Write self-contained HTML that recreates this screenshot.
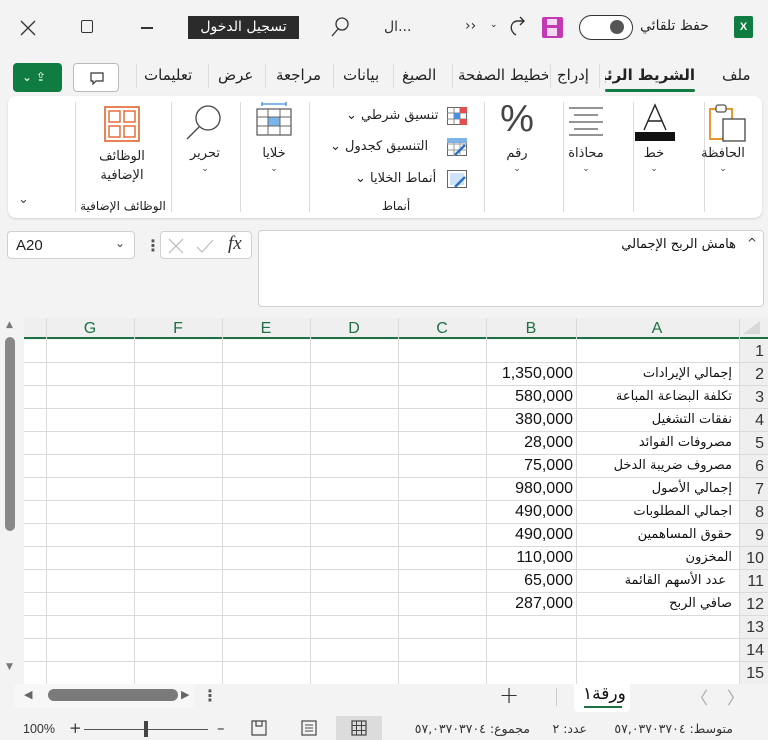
<!DOCTYPE html>
<html><head><meta charset="utf-8">
<style>
*{box-sizing:border-box;margin:0;padding:0}
body{width:768px;height:740px;overflow:hidden;background:#f3f3f3;position:relative;font-family:"DejaVu Sans","Liberation Sans",sans-serif;color:#222}
.a{position:absolute;white-space:nowrap}
.ar{font-family:"DejaVu Sans",sans-serif;font-size:13px}
.c{position:absolute;transform:translateX(-50%);white-space:nowrap;text-align:center}
.sep{position:absolute;width:1px;background:#dcdcdc}
.chev{font-size:9px;color:#444}
.cell{position:absolute;font-family:"Liberation Sans","DejaVu Sans",sans-serif;font-size:16px;color:#111;white-space:nowrap}
.lab{position:absolute;right:36px;font-family:"DejaVu Sans",sans-serif;font-size:13px;color:#111;white-space:nowrap}
.rn{position:absolute;right:4px;font-family:"Liberation Sans",sans-serif;font-size:16px;color:#333}
</style></head><body>

<svg class="a" style="left:20px;top:20px" width="16" height="16"><path d="M1 1L15 15M15 1L1 15" stroke="#333" stroke-width="1.3"/></svg>
<div class="a" style="left:81px;top:20px;width:12px;height:13px;border:1.5px solid #333;border-radius:2px"></div>
<div class="a" style="left:141px;top:27px;width:12px;height:1.5px;background:#333"></div>
<div class="a" style="left:188px;top:16px;width:111px;height:23px;background:#2b2b2b;color:#fff;font-size:14px;text-align:center;line-height:23px">تسجيل الدخول</div>
<svg class="a" style="left:330px;top:16px" width="20" height="22"><circle cx="12" cy="8" r="6" fill="none" stroke="#333" stroke-width="1.3"/><line x1="8" y1="13" x2="2" y2="20" stroke="#333" stroke-width="1.3"/></svg>
<div class="a" style="left:384px;top:19px;font-size:14px;color:#333">ال...</div>
<div class="a" style="left:465px;top:18px;font-size:14px;color:#333">››</div>
<div class="a" style="left:490px;top:20px;font-size:9px">⌄</div>
<svg class="a" style="left:506px;top:15px" width="24" height="24"><path d="M10 20 C3 16 4 7 11 6 L18 6 M14 2 L18 6 L14 10" fill="none" stroke="#333" stroke-width="1.4"/></svg>
<div class="a" style="left:542px;top:17px;width:21px;height:21px;background:#c239b3;border-radius:2px"><div style="position:absolute;left:5px;top:2px;width:10px;height:6px;background:#f5d8f2"></div><div style="position:absolute;left:5px;top:11px;width:10px;height:8px;background:#f5d8f2"></div></div>
<div class="a" style="left:579px;top:15px;width:54px;height:25px;border:1.5px solid #333;border-radius:13px;background:#fff"><div style="position:absolute;left:30px;top:4px;width:14px;height:14px;border-radius:7px;background:#555"></div></div>
<div class="a" style="left:640px;top:18px;font-size:14px">حفظ تلقائي</div>
<div class="a" style="left:734px;top:16px;width:19px;height:22px;background:#107c41;border-radius:2px;color:#fff;font-size:11px;font-weight:bold;text-align:center;line-height:22px;font-family:'Liberation Sans'">X</div>

<div class="a" style="left:13px;top:63px;width:49px;height:29px;background:#107c41;border-radius:4px;color:#fff;font-size:12px;line-height:29px;padding-left:9px">⌄ ⇪</div>
<div class="a" style="left:73px;top:63px;width:46px;height:29px;background:#fff;border:1px solid #bbb;border-radius:4px"><svg style="position:absolute;left:16px;top:8px" width="14" height="13"><path d="M1 1 H13 V9 H6 L3 12 V9 H1 Z" fill="none" stroke="#333" stroke-width="1.2"/></svg></div>
<div class="a" style="left:0;top:66px;width:768px;height:24px;font-size:15px">
 <span class="a" style="left:144px">تعليمات</span>
 <span class="a" style="left:218px">عرض</span>
 <span class="a" style="left:276px">مراجعة</span>
 <span class="a" style="left:343px">بيانات</span>
 <span class="a" style="left:402px">الصيغ</span>
 <span class="a" style="left:458px;width:90px;overflow:hidden">تخطيط الصفحة</span>
 <span class="a" style="left:557px">إدراج</span>
 <span class="a" style="left:605px;width:90px;overflow:hidden;font-weight:bold;direction:rtl;text-align:right">الشريط الرئيسي</span>
 <span class="a" style="left:722px">ملف</span>
</div>
<div class="sep" style="left:136px;top:64px;height:24px"></div>
<div class="sep" style="left:208px;top:64px;height:24px"></div>
<div class="sep" style="left:265px;top:64px;height:24px"></div>
<div class="sep" style="left:333px;top:64px;height:24px"></div>
<div class="sep" style="left:393px;top:64px;height:24px"></div>
<div class="sep" style="left:452px;top:64px;height:24px"></div>
<div class="sep" style="left:550px;top:64px;height:24px"></div>
<div class="sep" style="left:599px;top:64px;height:24px"></div>
<div class="a" style="left:605px;top:89px;width:90px;height:3px;background:#107c41;border-radius:2px"></div>

<div class="a" style="left:8px;top:96px;width:754px;height:122px;background:#fff;border-radius:8px;box-shadow:0 1px 2px rgba(0,0,0,.15)"></div>
<div class="sep" style="left:704px;top:102px;height:110px"></div>
<div class="sep" style="left:633px;top:102px;height:110px"></div>
<div class="sep" style="left:563px;top:102px;height:110px"></div>
<div class="sep" style="left:484px;top:102px;height:110px"></div>
<div class="sep" style="left:309px;top:102px;height:110px"></div>
<div class="sep" style="left:240px;top:102px;height:110px"></div>
<div class="sep" style="left:171px;top:102px;height:110px"></div>
<div class="sep" style="left:75px;top:102px;height:110px"></div>

<svg class="a" style="left:708px;top:103px" width="40" height="40"><rect x="2" y="6" width="22" height="30" fill="none" stroke="#e8962e" stroke-width="2"/><rect x="8" y="2" width="10" height="7" rx="2" fill="#fff" stroke="#555" stroke-width="1.3"/><rect x="15" y="16" width="22" height="22" fill="#fff" stroke="#444" stroke-width="1.3"/></svg>
<div class="c ar" style="left:723px;top:146px">الحافظة</div>
<div class="c chev" style="left:723px;top:164px">⌄</div>
<svg class="a" style="left:635px;top:102px" width="40" height="40"><path d="M9 28 L20 3 L31 28 M13 19 H27" fill="none" stroke="#222" stroke-width="1.4"/><rect x="0" y="30" width="40" height="9" fill="#111"/></svg>
<div class="c ar" style="left:654px;top:146px">خط</div>
<div class="c chev" style="left:654px;top:164px">⌄</div>
<svg class="a" style="left:566px;top:106px" width="40" height="30"><path d="M3 2H37M8 9H32M3 16H37M8 23H32M3 29H37" stroke="#555" stroke-width="1.3"/></svg>
<div class="c ar" style="left:586px;top:146px">محاذاة</div>
<div class="c chev" style="left:586px;top:164px">⌄</div>
<div class="c" style="left:517px;top:98px;font-size:38px;font-weight:200;color:#444;font-family:'Liberation Sans'">%</div>
<div class="c ar" style="left:517px;top:146px">رقم</div>
<div class="c chev" style="left:517px;top:164px">⌄</div>
<svg class="a" style="left:447px;top:107px" width="20" height="18"><rect x="0.5" y="0.5" width="19" height="17" fill="#fff" stroke="#666"/><path d="M7 0V18M13 0V18M0 6H20M0 12H20" stroke="#888"/><rect x="13" y="0" width="7" height="6" fill="#e05050"/><rect x="7" y="6" width="6" height="6" fill="#4a8fe0"/><rect x="13" y="12" width="7" height="6" fill="#e05050"/></svg>
<div class="a ar" style="left:346px;top:108px">⌄ تنسيق شرطي</div>
<svg class="a" style="left:447px;top:138px" width="20" height="18"><rect x="0.5" y="0.5" width="19" height="17" fill="#fff" stroke="#666"/><path d="M7 0V18M13 0V18M0 6H20M0 12H20" stroke="#999"/><rect x="0" y="0" width="20" height="5" fill="#7fb3e8"/><path d="M8 17 L18 7" stroke="#2a6fc0" stroke-width="2.5"/></svg>
<div class="a ar" style="left:330px;top:139px">⌄ التنسيق كجدول</div>
<svg class="a" style="left:447px;top:170px" width="20" height="18"><rect x="0.5" y="0.5" width="19" height="17" fill="#fff" stroke="#666"/><rect x="3" y="3" width="14" height="12" fill="#cfe2f8"/><path d="M8 17 L18 7" stroke="#2a6fc0" stroke-width="2.5"/></svg>
<div class="a ar" style="left:355px;top:171px">⌄ أنماط الخلايا</div>
<div class="c ar" style="left:396px;top:199px;font-size:12px">أنماط</div>
<svg class="a" style="left:256px;top:102px" width="36" height="34"><path d="M6 2H30M6 0V4M30 0V4" stroke="#3a8ee0" stroke-width="1.3"/><rect x="1" y="7" width="34" height="26" fill="#fff" stroke="#555" stroke-width="1.2"/><rect x="12" y="15" width="12" height="9" fill="#7ab4ea" stroke="#2a6fc0"/><path d="M12 7V33M24 7V33M1 15H35M1 24H35" stroke="#666"/></svg>
<div class="c ar" style="left:274px;top:146px">خلايا</div>
<div class="c chev" style="left:274px;top:164px">⌄</div>
<svg class="a" style="left:185px;top:103px" width="40" height="38"><circle cx="23" cy="15" r="12" fill="none" stroke="#444" stroke-width="1.3"/><line x1="14" y1="24" x2="2" y2="36" stroke="#444" stroke-width="1.3"/></svg>
<div class="c ar" style="left:205px;top:146px">تحرير</div>
<div class="c chev" style="left:205px;top:164px">⌄</div>
<svg class="a" style="left:104px;top:106px" width="36" height="36"><rect x="1" y="1" width="34" height="34" fill="none" stroke="#e0652f" stroke-width="1.6"/><rect x="5" y="5" width="11" height="11" fill="none" stroke="#e0652f" stroke-width="1.4"/><rect x="20" y="5" width="11" height="11" fill="none" stroke="#e0652f" stroke-width="1.4"/><rect x="5" y="20" width="11" height="11" fill="none" stroke="#e0652f" stroke-width="1.4"/><rect x="20" y="20" width="11" height="11" fill="none" stroke="#e0652f" stroke-width="1.4"/></svg>
<div class="c ar" style="left:122px;top:147px;line-height:19px">الوظائف<br>الإضافية</div>
<div class="c ar" style="left:123px;top:199px;font-size:12px">الوظائف الإضافية</div>
<div class="a" style="left:18px;top:192px;font-size:13px;color:#444">⌄</div>

<div class="a" style="left:7px;top:231px;width:128px;height:28px;background:#fff;border:1px solid #d0d0d0;border-radius:4px"><span class="a" style="left:8px;top:5px;font-family:'Liberation Sans';font-size:15px">A20</span><span class="a" style="left:107px;top:4px;font-size:12px;color:#444">⌄</span></div>
<div class="a" style="left:145px;top:236px;font-size:16px;font-weight:bold;color:#555">⋮</div>
<div class="a" style="left:160px;top:231px;width:92px;height:28px;background:#fff;border:1px solid #d0d0d0;border-radius:4px">
<svg style="position:absolute;left:7px;top:6px" width="16" height="16"><path d="M1 1L15 15M15 1L1 15" stroke="#bbb" stroke-width="1.2"/></svg>
<svg style="position:absolute;left:35px;top:6px" width="18" height="16"><path d="M1 9L6 14L17 2" fill="none" stroke="#bbb" stroke-width="1.2"/></svg>
<span style="position:absolute;left:67px;top:1px;font-family:'Liberation Serif';font-style:italic;font-size:19px;color:#333">fx</span></div>
<div class="a" style="left:258px;top:230px;width:506px;height:77px;background:#fff;border:1px solid #d0d0d0;border-radius:4px">
<span class="a" style="right:27px;top:6px;font-size:13px;color:#111">هامش الربح الإجمالي</span>
<span class="a" style="right:6px;top:5px;font-size:12px;color:#333">^</span></div>

<div class="a" style="left:24px;top:318px;width:744px;height:21px;background:#efefef;border-bottom:2px solid #1e7145"></div>
<div class="a" style="left:24px;top:340px;width:715px;height:344px;background:#fff"></div>
<div class="a" style="left:739px;top:340px;width:29px;height:344px;background:#efefef;overflow:hidden">
<span class="rn" style="top:3px">1</span><span class="rn" style="top:26px">2</span><span class="rn" style="top:49px">3</span><span class="rn" style="top:72px">4</span><span class="rn" style="top:95px">5</span><span class="rn" style="top:118px">6</span><span class="rn" style="top:141px">7</span><span class="rn" style="top:164px">8</span><span class="rn" style="top:187px">9</span><span class="rn" style="top:210px">10</span><span class="rn" style="top:233px">11</span><span class="rn" style="top:256px">12</span><span class="rn" style="top:279px">13</span><span class="rn" style="top:302px">14</span><span class="rn" style="top:325px">15</span></div>
<svg class="a" style="left:0;top:318px" width="768" height="366">
<g stroke="#dadada" stroke-width="1">
<path d="M46.5 0V366M134.5 0V366M222.5 0V366M310.5 0V366M398.5 0V366M486.5 0V366M576.5 0V366M739.5 0V366"/>
<path d="M24 44.5H768M24 67.5H768M24 90.5H768M24 113.5H768M24 136.5H768M24 159.5H768M24 182.5H768M24 205.5H768M24 228.5H768M24 251.5H768M24 274.5H768M24 297.5H768M24 320.5H768M24 343.5H768"/>
</g>
<path d="M743 16L760 16L760 3Z" fill="#d8d8d8"/>
</svg>
<div class="a" style="left:0;top:320px;width:768px;font-family:'Liberation Sans';font-size:16px;color:#1e7145">
<span class="c" style="left:90px">G</span><span class="c" style="left:178px">F</span><span class="c" style="left:266px">E</span><span class="c" style="left:354px">D</span><span class="c" style="left:442px">C</span><span class="c" style="left:531px">B</span><span class="c" style="left:657px">A</span></div>

<div class="a" style="left:0;top:340px;width:768px;height:344px">
<div class="lab" style="top:26px">إجمالي الإيرادات</div>
<div class="lab" style="top:49px">تكلفة البضاعة المباعة</div>
<div class="lab" style="top:72px">نفقات التشغيل</div>
<div class="lab" style="top:95px">مصروفات الفوائد</div>
<div class="lab" style="top:118px">مصروف ضريبة الدخل</div>
<div class="lab" style="top:141px">إجمالي الأصول</div>
<div class="lab" style="top:164px">اجمالي المطلوبات</div>
<div class="lab" style="top:187px">حقوق المساهمين</div>
<div class="lab" style="top:210px">المخزون</div>
<div class="lab" style="top:233px;right:42px">عدد الأسهم القائمة</div>
<div class="lab" style="top:256px">صافي الربح</div>
<div class="cell" style="right:195px;top:25px">1,350,000</div>
<div class="cell" style="right:195px;top:48px">580,000</div>
<div class="cell" style="right:195px;top:71px">380,000</div>
<div class="cell" style="right:195px;top:94px">28,000</div>
<div class="cell" style="right:195px;top:117px">75,000</div>
<div class="cell" style="right:195px;top:140px">980,000</div>
<div class="cell" style="right:195px;top:163px">490,000</div>
<div class="cell" style="right:195px;top:186px">490,000</div>
<div class="cell" style="right:195px;top:209px">110,000</div>
<div class="cell" style="right:195px;top:232px">65,000</div>
<div class="cell" style="right:195px;top:255px">287,000</div>
</div>

<div class="a" style="left:6px;top:320px;font-size:9px;color:#777">▲</div>
<div class="a" style="left:5px;top:337px;width:10px;height:194px;background:#888;border-radius:5px"></div>
<div class="a" style="left:6px;top:662px;font-size:9px;color:#777">▼</div>

<div class="a" style="left:14px;top:684px;width:180px;height:24px;background:#f7f7f7;border-radius:4px"></div>
<div class="a" style="left:24px;top:688px;font-size:11px;color:#666">◀</div>
<div class="a" style="left:48px;top:689px;width:130px;height:12px;background:#7a7a7a;border-radius:6px"></div>
<div class="a" style="left:181px;top:688px;font-size:11px;color:#666">▶</div>
<div class="a" style="left:202px;top:686px;font-size:16px;font-weight:bold;color:#555">⋮</div>
<div class="a" style="left:499px;top:681px;font-size:24px;font-weight:200;color:#333">+</div>
<div class="sep" style="left:556px;top:688px;height:18px;background:#ccc"></div>
<div class="a" style="left:574px;top:684px;width:56px;height:28px;background:#fff;border-radius:0 0 4px 4px"></div>
<div class="a" style="left:583px;top:684px;font-size:17px;color:#111">ورقة١</div>
<div class="a" style="left:584px;top:706px;width:38px;height:2px;background:#1e7145"></div>
<div class="a" style="left:691px;top:684px;font-size:17px;color:#aaa">〈</div>
<div class="a" style="left:727px;top:684px;font-size:17px;color:#aaa">〉</div>

<div class="a" style="left:0;top:716px;width:768px;height:24px;font-size:12.5px;color:#333">
<span class="a" style="left:23px;top:6px;font-family:'Liberation Sans'">100%</span>
<span class="a" style="left:69px;top:3px;font-size:15px">+</span>
<div class="a" style="left:84px;top:13px;width:60px;height:1px;background:#555"></div>
<div class="a" style="left:144px;top:5px;width:4px;height:16px;background:#444"></div>
<div class="a" style="left:148px;top:13px;width:60px;height:1px;background:#555"></div>
<span class="a" style="left:217px;top:3px;font-size:15px">–</span>
<svg class="a" style="left:251px;top:4px" width="16" height="16"><path d="M1 1H15V15H1Z M5 1V6H11V1" fill="none" stroke="#444" stroke-width="1.2"/></svg>
<svg class="a" style="left:301px;top:4px" width="16" height="16"><rect x="1" y="1" width="14" height="14" fill="none" stroke="#444" stroke-width="1.2"/><path d="M4 5H12M4 8H12M4 11H12" stroke="#444"/></svg>
<div class="a" style="left:336px;top:0;width:46px;height:24px;background:#dcdcdc"></div>
<svg class="a" style="left:351px;top:4px" width="16" height="16"><rect x="1" y="1" width="14" height="14" fill="none" stroke="#444" stroke-width="1.2"/><path d="M5.5 1V15M10.5 1V15M1 5.5H15M1 10.5H15" stroke="#444"/></svg>
<span class="a" dir="rtl" style="right:238px;top:5px">مجموع: ٥٧,٠٣٧٠٣٧٠٤</span>
<span class="a" dir="rtl" style="right:181px;top:5px">عدد: ٢</span>
<span class="a" dir="rtl" style="right:35px;top:5px">متوسط: ٥٧,٠٣٧٠٣٧٠٤</span>
</div>
</body></html>
